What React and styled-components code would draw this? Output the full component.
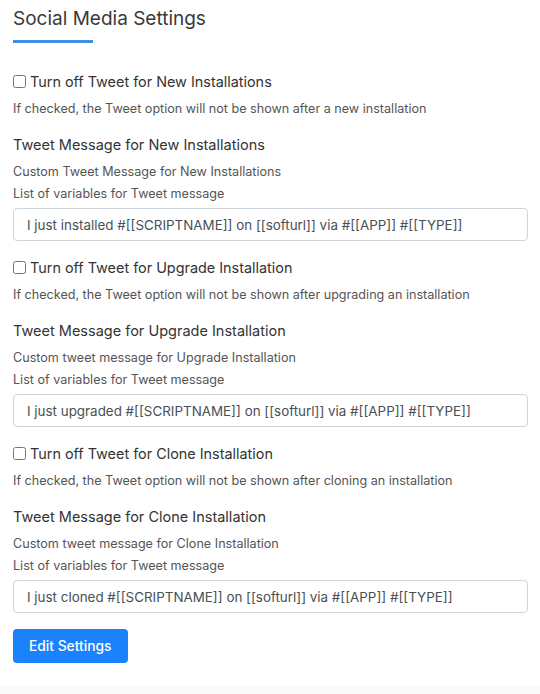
import React from 'react';
import styled, { createGlobalStyle } from 'styled-components';

const GlobalStyle = createGlobalStyle`
  body {
    margin: 0;
    background: #fafafa;
    font-family: Inter, "Open Sans", Arial, sans-serif;
    color: #333;
  }
`
const Card = styled.div`
  background: #ffffff;
  padding: 6px 12px 22px 13px;
`
const Title = styled.h2`
  margin: 0;
  font-size: 19px;
  line-height: 26px;
  font-weight: 400;
  color: #3a3a3a;
`
const Underline = styled.div`
  width: 80px;
  height: 3px;
  margin-top: 8px;
  background: #3f8fe8;
`
const Section = styled.div`
  margin-top: ${(p) => p.first ? '28px' : '16px'};
`
const CheckRow = styled.label`
  display: flex;
  align-items: center;
  gap: 4px;
  height: 20px;
  font-size: 14.4px;
  color: #333;
`
const Box = styled.input`
  width: 13px;
  height: 13px;
  margin: 0;
`
const Help = styled.div`
  margin-top: ${(p) => p.gap || 0}px;
  font-size: 12.6px;
  line-height: 20px;
  color: #555;
`
const Heading = styled.div`
  margin-top: 15px;
  font-size: 14.5px;
  line-height: 22px;
  color: #333;
`
const Field = styled.input`
  display: block;
  box-sizing: border-box;
  width: 100%;
  height: 33px;
  margin-top: 4px;
  padding: 0 13px;
  border: 1px solid #ced4da;
  border-radius: 4px;
  font-family: inherit;
  font-size: 13.4px;
  color: #495057;
  background: #fff;
`
const Button = styled.button`
  margin-top: 16px;
  height: 34px;
  padding: 0 17px 0 16px;
  border: none;
  border-radius: 4px;
  background: #1a82fb;
  color: #fff;
  font-family: inherit;
  font-size: 13.8px;
  font-weight: 500;
`

const sections = [
  {
    check: 'Turn off Tweet for New Installations',
    help: 'If checked, the Tweet option will not be shown after a new installation',
    heading: 'Tweet Message for New Installations',
    custom: 'Custom Tweet Message for New Installations',
    value: 'I just installed #[[SCRIPTNAME]] on [[softurl]] via #[[APP]] #[[TYPE]]',
  },
  {
    check: 'Turn off Tweet for Upgrade Installation',
    help: 'If checked, the Tweet option will not be shown after upgrading an installation',
    heading: 'Tweet Message for Upgrade Installation',
    custom: 'Custom tweet message for Upgrade Installation',
    value: 'I just upgraded #[[SCRIPTNAME]] on [[softurl]] via #[[APP]] #[[TYPE]]',
  },
  {
    check: 'Turn off Tweet for Clone Installation',
    help: 'If checked, the Tweet option will not be shown after cloning an installation',
    heading: 'Tweet Message for Clone Installation',
    custom: 'Custom tweet message for Clone Installation',
    value: 'I just cloned #[[SCRIPTNAME]] on [[softurl]] via #[[APP]] #[[TYPE]]',
  },
];

export default function App() {
  return (
    <>
      <GlobalStyle />
      <Card>
        <Title>Social Media Settings</Title>
        <Underline />
        {sections.map((s, i) => (
          <Section key={i} first={i === 0}>
            <CheckRow>
              <Box type="checkbox" />
              {s.check}
            </CheckRow>
            <Help gap={8}>{s.help}</Help>
            <Heading>{s.heading}</Heading>
            <Help gap={6}>{s.custom}</Help>
            <Help gap={2}>List of variables for Tweet message</Help>
            <Field defaultValue={s.value} />
          </Section>
        ))}
        <Button>Edit Settings</Button>
      </Card>
    </>
  );
}
